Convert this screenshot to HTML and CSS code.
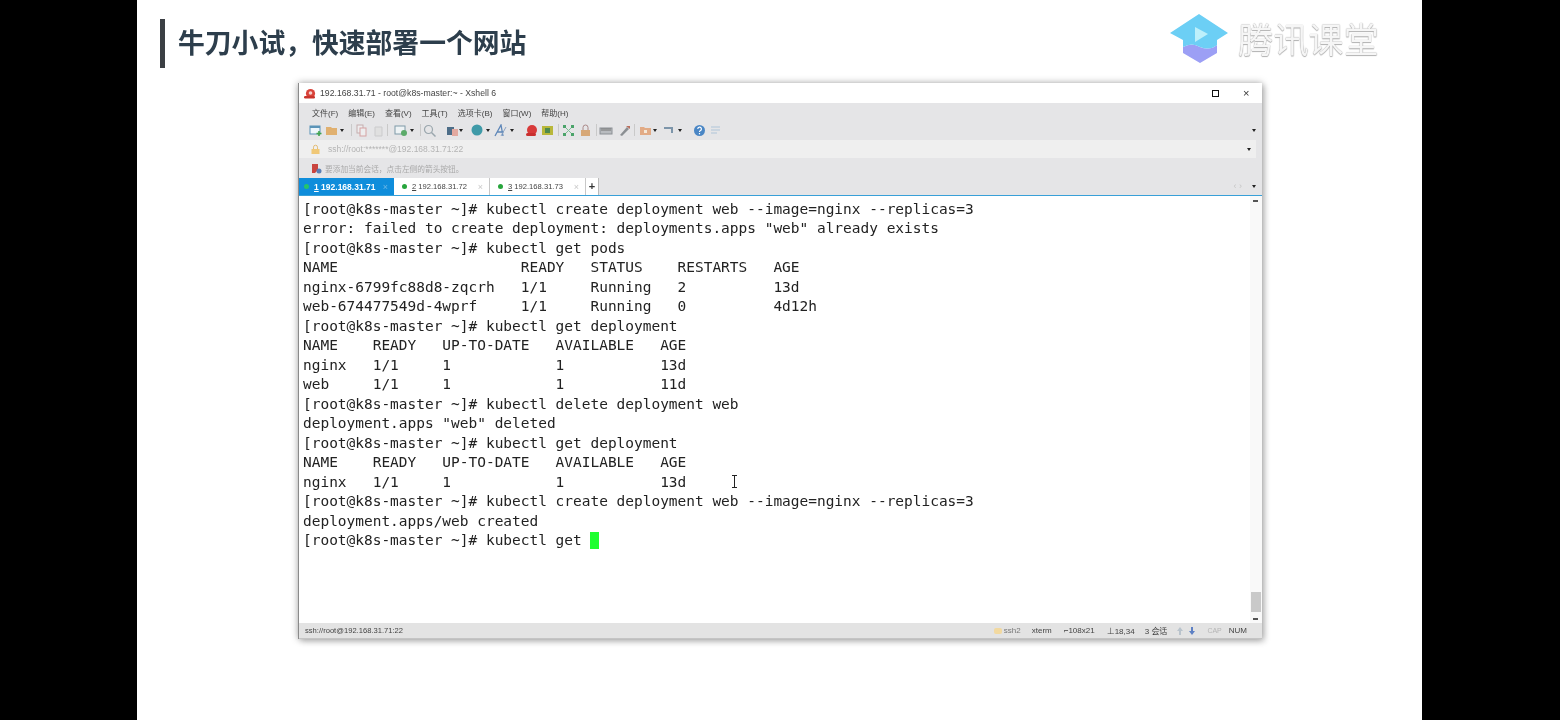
FILE: index.html
```html
<!DOCTYPE html>
<html lang="zh">
<head>
<meta charset="utf-8">
<title>牛刀小试&#xFF0C;快速部署一个网站</title>
<link rel="stylesheet" href="styles.css">
</head>
<body>
<main class="slide">
  <header class="slide-head">
    <h1 class="slide-title">牛刀小试&#xFF0C;快速部署一个网站</h1>
    <div class="brand">
      <svg class="brand-mark" width="60" height="52" viewBox="0 0 60 52"><path d="M13 34 Q22 29 30 34 Q40 38 47 32 L47 40 L30 50 L13 40Z" fill="#9c9ff5"/><path d="M0 20 L29 1 L58 20 L47 27 L47 32 Q40 38 30 34 Q22 29 13 34 L13 27Z" fill="#6ccff5"/><path d="M25 14 L38 21 L25 29Z" fill="#bdf0fb"/></svg>
      <span class="brand-name">腾讯课堂</span>
    </div>
  </header>
  <section class="xshell">
    <div class="titlebar">
      <svg class="snail" width="12" height="11" viewBox="0 0 12 11"><circle cx="6.500" cy="5.500" r="4.600" fill="#d9433a"/><circle cx="6.500" cy="5" r="1.800" fill="#f4d0cc"/><rect x="0" y="8" width="11" height="2.400" rx="1.200" fill="#c9342c"/></svg>
      <span class="title-text">192.168.31.71 - root@k8s-master:~ - Xshell 6</span>
      <span class="win-max"></span>
      <span class="win-close">×</span>
    </div>
    <div class="chrome">
      <nav class="menubar">
        <span>文件(F)</span><span>编辑(E)</span><span>查看(V)</span><span>工具(T)</span><span>选项卡(B)</span><span>窗口(W)</span><span>帮助(H)</span>
      </nav>
      <div class="toolbar">
        <svg width="14" height="13" viewBox="0 0 14 13"><rect x="1" y="2" width="10" height="8" fill="#eef6fb" stroke="#5b94b8"/><rect x="1" y="2" width="10" height="2" fill="#5b94b8"/><path d="M10 7v5M7.500 9.500h5" stroke="#3fa34d" stroke-width="1.600"/></svg>
        <svg class="m2" width="14" height="13" viewBox="0 0 14 13"><path d="M1 3h5l1 1h5v7H1z" fill="#e0b070"/></svg>
        <i class="caret m1"></i><i class="sep m7"></i>
        <svg class="faint m3" width="13" height="13" viewBox="0 0 13 13"><rect x="2" y="1" width="6" height="8" fill="#f3f3f3" stroke="#b08a8a"/><rect x="5" y="4" width="6" height="8" fill="#f3f3f3" stroke="#c77"/></svg>
        <svg class="faint m4" width="13" height="13" viewBox="0 0 13 13"><path d="M3 3h7v9H3z" fill="#ddd" stroke="#bbb"/></svg>
        <i class="sep m2"></i>
        <svg class="m6" width="15" height="13" viewBox="0 0 15 13"><rect x="1" y="2" width="10" height="8" fill="#eef3f5" stroke="#7f9aa8"/><circle cx="10" cy="9" r="3" fill="#5cab6a"/></svg>
        <i class="caret m1"></i><i class="sep m6"></i>
        <svg class="m2" width="14" height="13" viewBox="0 0 14 13"><circle cx="5.500" cy="5.500" r="4" fill="none" stroke="#9aa6ad" stroke-width="1.200"/><path d="M8.500 8.500l4 4" stroke="#9aa6ad" stroke-width="1.500"/></svg>
        <svg class="m9" width="13" height="13" viewBox="0 0 13 13"><rect x="1" y="3" width="7" height="8" fill="#4d6d88"/><rect x="6" y="5" width="6" height="7" fill="#e2a9a0"/></svg>
        <i class="caret"></i>
        <svg class="m7" width="14" height="14" viewBox="0 0 14 14"><circle cx="7" cy="7" r="5.500" fill="#3f9aa8"/></svg>
        <i class="caret m2"></i>
        <svg class="m4" width="14" height="13" viewBox="0 0 14 13"><path d="M1 12 L7 1 L9 12M3.500 8h6" fill="none" stroke="#5d86b8" stroke-width="1.300"/><path d="M7 12 L12 3" stroke="#8aa3c4"/></svg>
        <i class="caret m2"></i>
        <svg class="m11" width="13" height="13" viewBox="0 0 13 13"><circle cx="7" cy="6" r="5" fill="#d83a3a"/><rect x="1" y="9" width="10" height="3" rx="1.500" fill="#c92f2f"/></svg>
        <svg class="m3" width="13" height="13" viewBox="0 0 13 13"><rect x="1" y="2" width="11" height="9" fill="#b8b73a"/><rect x="4" y="4" width="5" height="5" fill="#4d8a4d"/></svg>
        <i class="sep m4"></i>
        <svg class="m3" width="13" height="13" viewBox="0 0 13 13"><path d="M1 1h3v3H1zM9 1h3v3H9zM1 9h3v3H1zM9 9h3v3H9z" fill="#4aa36a"/><path d="M4 4l5 5M9 4l-5 5" stroke="#7bbf92"/></svg>
        <svg class="m4" width="13" height="13" viewBox="0 0 13 13"><rect x="2" y="6" width="9" height="6" fill="#d7a878"/><path d="M4 6V3.500a2.500 2.500 0 0 1 5 0V6" fill="none" stroke="#a88"/></svg>
        <i class="sep m4"></i>
        <svg class="m2" width="14" height="13" viewBox="0 0 14 13"><rect x="1" y="4" width="12" height="6" fill="#b9bcc0" stroke="#8b9095"/><path d="M3 4v3M5 4v3M7 4v3M9 4v3M11 4v3" stroke="#777"/></svg>
        <svg class="m5" width="13" height="13" viewBox="0 0 13 13"><path d="M2 11 L9 3 L11 5 L4 12Z" fill="#8b8f93"/><path d="M8 2h4v3z" fill="#b96d5c"/></svg>
        <i class="sep m3"></i>
        <svg class="m4" width="13" height="13" viewBox="0 0 13 13"><path d="M1 3h4l1 1h6v7H1z" fill="#e2ab86"/><rect x="5" y="6" width="3" height="3" fill="#f5e8d8"/></svg>
        <i class="caret m1"></i>
        <svg class="m5" width="13" height="13" viewBox="0 0 13 13"><path d="M2 3h9v6H9V5H2z" fill="#7d95aa"/></svg>
        <i class="caret m3"></i>
        <svg class="m11" width="13" height="13" viewBox="0 0 13 13"><circle cx="6.500" cy="6.500" r="5.500" fill="#4a86c5"/><path d="M4.800 5a1.800 1.800 0 1 1 2.400 1.700c-.6.300-.7.600-.7 1.300" fill="none" stroke="#fff" stroke-width="1.200"/><rect x="5.900" y="9" width="1.200" height="1.300" fill="#fff"/></svg>
        <svg class="faint m3" width="13" height="13" viewBox="0 0 13 13"><path d="M2 3h9M2 6h9M2 9h6" stroke="#8bb2cf" stroke-width="1.200"/></svg>
        <i class="caret caret-end"></i>
      </div>
      <div class="addressbar">
        <svg width="11" height="11" viewBox="0 0 11 11"><rect x="1.500" y="5" width="8" height="5" fill="#f0c877"/><path d="M3.500 5V3.200a2 2 0 0 1 4 0V5" fill="none" stroke="#e3bd78"/></svg>
        <span class="addr-text">ssh://root:*******@192.168.31.71:22</span>
        <i class="caret caret-end"></i>
      </div>
      <div class="noticebar">
        <svg width="11" height="11" viewBox="0 0 11 11"><path d="M1 1h6v6l-3 3H1z" fill="#c9443f"/><circle cx="8" cy="8" r="2.500" fill="#5a7fb5"/></svg>
        <span class="notice-text">要添加当前会话&#xFF0C;点击左侧的箭头按钮。</span>
      </div>
      <div class="tabbar">
        <div class="tab tab-active"><b class="dot"></b><span class="tab-label"><u>1</u> 192.168.31.71</span><span class="tab-x">×</span></div>
        <div class="tab"><b class="dot"></b><span class="tab-label"><u>2</u> 192.168.31.72</span><span class="tab-x">×</span></div>
        <div class="tab"><b class="dot"></b><span class="tab-label"><u>3</u> 192.168.31.73</span><span class="tab-x">×</span></div>
        <div class="tab-add">+</div>
        <span class="tab-nav">‹ ›</span>
        <i class="caret caret-tab"></i>
      </div>
    </div>
    <div class="term-wrap">
<pre class="terminal">[root@k8s-master ~]# kubectl create deployment web --image=nginx --replicas=3
error: failed to create deployment: deployments.apps "web" already exists
[root@k8s-master ~]# kubectl get pods
NAME                     READY   STATUS    RESTARTS   AGE
nginx-6799fc88d8-zqcrh   1/1     Running   2          13d
web-674477549d-4wprf     1/1     Running   0          4d12h
[root@k8s-master ~]# kubectl get deployment
NAME    READY   UP-TO-DATE   AVAILABLE   AGE
nginx   1/1     1            1           13d
web     1/1     1            1           11d
[root@k8s-master ~]# kubectl delete deployment web
deployment.apps "web" deleted
[root@k8s-master ~]# kubectl get deployment
NAME    READY   UP-TO-DATE   AVAILABLE   AGE
nginx   1/1     1            1           13d
[root@k8s-master ~]# kubectl create deployment web --image=nginx --replicas=3
deployment.apps/web created
[root@k8s-master ~]# kubectl get <span class="cursor"> </span></pre>
      <svg class="ibeam" width="7" height="13" viewBox="0 0 7 13"><path d="M1 .5h5M1 12.500h5M3.500 .5v12" fill="none" stroke="#222" stroke-width="1"/></svg>
      <div class="scrollbar">
        <i class="arrow"></i>
        <div class="thumb"></div>
        <i class="arrow"></i>
      </div>
    </div>
    <footer class="statusbar">
      <span class="status-left">ssh://root@192.168.31.71:22</span>
      <span class="status-right">
        <span class="status-item ssh"><b class="ssh-lock"></b>ssh2</span><span class="status-item">xterm</span><span class="status-item">⌐108x21</span><span class="status-item tight">⊥18,34</span><span class="status-item tight">3 会话</span>
        <span class="arrows">
          <svg width="6" height="8" viewBox="0 0 6 8"><path d="M3 0L6 4H4V8H2V4H0z" fill="#b9c3cc"/></svg>
          <svg width="6" height="8" viewBox="0 0 6 8"><path d="M3 8L6 4H4V0H2V4H0z" fill="#5d80c4"/></svg>
        </span>
        <span class="cap">CAP</span><span class="num">NUM</span>
      </span>
    </footer>
  </section>
</main>
</body>
</html>
```

FILE: styles.css
```css
* { box-sizing: border-box; }
html, body { margin: 0; height: 100%; background: #000; overflow: hidden; }

.slide {
  width: 1285px;
  height: 720px;
  margin-left: 137px;
  background: #fff;
  font-family: "Liberation Sans", "Noto Sans CJK SC", sans-serif;
}

.slide-head {
  height: 83px;
  padding: 19px 43px 0 23px;
  display: flex;
  justify-content: space-between;
  align-items: flex-start;
}
.slide-title {
  margin: 0;
  height: 49px;
  padding: 6px 0 0 13px;
  border-left: 5px solid #3b3f44;
  font: 700 26.800px/34px "Noto Sans CJK SC", sans-serif;
  color: #2d3e4c;
  filter: blur(.4px);
}
.brand { display: flex; align-items: center; gap: 8px; margin-top: -6px; filter: blur(.5px); }
.brand-mark { display: block; }
.brand-name {
  font: 400 35px/44px "Noto Sans CJK SC", sans-serif;
  letter-spacing: 0.2px;
  margin-top: -2px;
  color: #f6f6f6;
  text-shadow: 0 0 1px #8d8d8d, 0 1px 1px #b5b5b5;
}

.xshell {
  width: 964px;
  height: 556px;
  margin-left: 161px;
  display: flex;
  flex-direction: column;
  background: #fff;
  border-left: 1px solid #8a8a8a;
  box-shadow: 0 0 7px rgba(0,0,0,.35), 3px 3px 6px rgba(0,0,0,.15);
}

.titlebar {
  height: 20px;
  flex: none;
  display: flex;
  align-items: center;
  padding: 0 8px 0 5px;
  background: #fff;
  font-size: 8.700px;
  filter: blur(.4px);
}
.snail { margin-right: 4px; }
.title-text { flex: 1; color: #444; }
.win-max { width: 7px; height: 7px; border: 1.500px solid #111; margin-right: 24px; }
.win-close { width: 8px; font-size: 11px; line-height: 8px; color: #333; margin-right: 3px; }

.chrome { flex: none; background: #e5e5e7; color: #555; filter: blur(.45px); }
.menubar {
  height: 19px;
  display: flex;
  align-items: center;
  gap: 10px;
  padding: 0 0 0 13px;
  font-size: 8px;
  color: #444;
}
.toolbar {
  height: 18px;
  display: flex;
  align-items: center;
  padding: 0 6px 2px 10px;
}
.toolbar svg { flex: none; }
.faint { opacity: .6; }
.m1 { margin-left: 1px; }
.m2 { margin-left: 2px; }
.m3 { margin-left: 3px; }
.m4 { margin-left: 4px; }
.m5 { margin-left: 5px; }
.m6 { margin-left: 6px; }
.m7 { margin-left: 7px; }
.m9 { margin-left: 9px; }
.m11 { margin-left: 11px; }
.caret { width: 0; height: 0; border: 2px solid transparent; border-top: 3px solid #222; border-bottom: 0; flex: none; }
.caret-end { margin-left: auto; }
.sep { width: 1px; height: 12px; background: #c9c9c9; flex: none; }

.addressbar {
  height: 18px;
  margin-right: 6px;
  display: flex;
  align-items: center;
  gap: 7px;
  padding: 0 5px 0 11px;
  background: #efefef;
  font-size: 8.500px;
}
.addr-text { color: #b4b4b4; }
.noticebar {
  height: 20px;
  display: flex;
  align-items: center;
  gap: 3px;
  padding: 0 0 0 12px;
  font-size: 7.700px;
  color: #a9a9a9;
}
.tabbar {
  height: 18px;
  display: flex;
  align-items: stretch;
  border-bottom: 1px solid #38a0d8;
  padding-right: 6px;
}
.tab {
  width: 96px;
  display: flex;
  align-items: center;
  padding: 0 6px 0 8px;
  gap: 5px;
  background: #fff;
  border-right: 1px solid #c8c8c8;
  font-size: 7.600px;
  color: #444;
}
.tab-active {
  width: 95px;
  padding-left: 5px;
  background: #0f8ddb;
  color: #fff;
  font-size: 8.500px;
  font-weight: 700;
  border-right: 0;
}
.dot { width: 5px; height: 5px; border-radius: 50%; background: #27a53c; flex: none; }
.tab-active .dot { background: #25c46b; }
.tab-label { flex: 1; white-space: nowrap; overflow: hidden; }
.tab-x { color: #c9c9c9; font-size: 9px; font-weight: 400; }
.tab-active .tab-x { color: #6fb8e6; }
.tab-add {
  width: 13px;
  background: #fff;
  border-right: 1px solid #bbb;
  font: 700 11px/16px "Liberation Sans", sans-serif;
  color: #333;
  text-align: center;
}
.tab-nav { margin-left: auto; margin-right: 10px; color: #c6c6c6; font-size: 9px; line-height: 17px; }
.caret-tab { align-self: center; margin: 0; }

.term-wrap {
  flex: 1;
  min-height: 0;
  position: relative;
  background: #fff;
  display: flex;
}
.terminal {
  flex: 1;
  margin: 0;
  padding: 4px 0 0 4px;
  font: 400 14.480px/19.470px "DejaVu Sans Mono", monospace;
  color: #222;
  white-space: pre;
  filter: blur(.3px);
}
.cursor { display: inline-block; width: 9px; height: 17px; background: #1eff30; vertical-align: -1px; filter: blur(.5px); }
.ibeam { position: absolute; left: 432px; top: 279px; }
.scrollbar {
  flex: none;
  width: 12px;
  display: flex;
  flex-direction: column;
  align-items: center;
  justify-content: flex-end;
  background: #f9f9f9;
  position: relative;
  filter: blur(.4px);
}
.scrollbar .arrow { width: 5px; height: 2px; background: #555; position: absolute; left: 3px; }
.scrollbar .arrow:first-child { top: 4px; }
.scrollbar .arrow:last-child { bottom: 3px; }
.thumb { width: 10px; height: 20px; background: #c9c9c9; margin-bottom: 11px; }

.statusbar {
  height: 16px;
  flex: none;
  display: flex;
  justify-content: space-between;
  align-items: center;
  padding: 0 15px 0 6px;
  background: #e3e3e3;
  font-size: 8px;
  color: #444;
  border-bottom: 1px solid #c4c4c4;
  filter: blur(.4px);
}
.status-left { font-size: 7.600px; }
.status-right { display: flex; align-items: center; gap: 12px; }
.tight { margin-right: -2px; }
.ssh { position: relative; color: #777; margin-right: -1px; }
.ssh-lock {
  position: absolute;
  left: -10px;
  top: 2px;
  width: 8px;
  height: 6px;
  border-radius: 2px;
  background: #f2d9a0;
}
.arrows { display: flex; gap: 6px; }
.arrows svg { display: block; }
.cap { color: #b5b5b5; font-size: 7px; }
.num { color: #444; margin-left: -5px; }
```
